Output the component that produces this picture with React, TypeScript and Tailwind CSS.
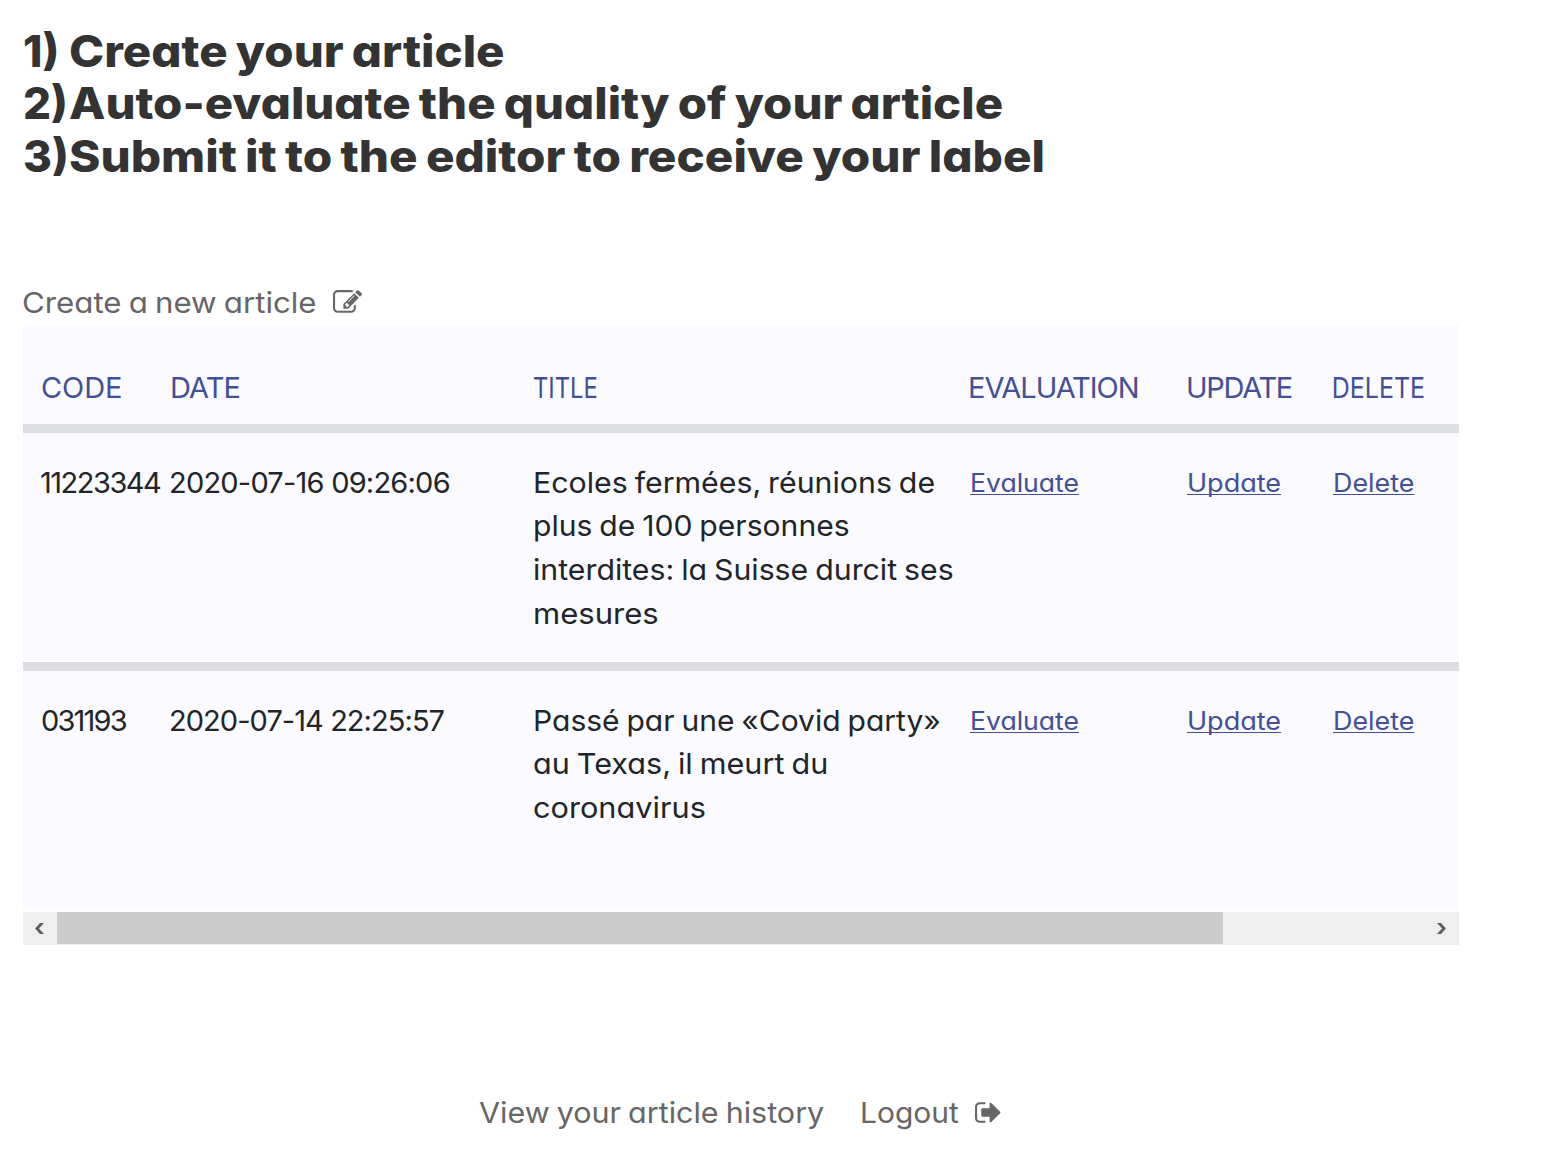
import type { ReactNode } from "react";

function PencilSquareIcon() {
  return (
    <svg viewBox="0 0 1792 1792" className="size-[29px] shrink-0 fill-current" aria-hidden="true">
      <path d="M888 1184l116-116-152-152-116 116v56h96v96h56zm440-720q-16-16-33 1l-350 350q-17 17-1 33t33-1l350-350q17-17 1-33zm80 594v190q0 119-84.5 203.5t-203.5 84.5h-832q-119 0-203.5-84.5t-84.5-203.5v-832q0-119 84.5-203.5t203.5-84.5h832q63 0 117 25 15 7 18 23 3 17-9 29l-49 49q-14 14-32 8-23-6-45-6h-832q-66 0-113 47t-47 113v832q0 66 47 113t113 47h832q66 0 113-47t47-113v-126q0-13 9-22l64-64q15-15 35-7t20 29zm-96-738l288 288-672 672h-288v-288zm444 132l-92 92-288-288 92-92q28-28 68-28t68 28l152 152q28 28 28 68t-28 68z" />
    </svg>
  );
}

function SignOutIcon() {
  return (
    <svg viewBox="0 0 1792 1792" className="size-[29px] shrink-0 fill-current" aria-hidden="true">
      <path d="M704 1440q0 4 1 20t.5 26.5-3 23.5-10 19.5-20.5 6.5h-320q-119 0-203.5-84.5t-84.5-203.5v-704q0-119 84.5-203.5t203.5-84.5h320q13 0 22.5 9.5t9.5 22.5q0 4 1 20t.5 26.5-3 23.5-10 19.5-20.5 6.5h-320q-66 0-113 47t-47 113v704q0 66 47 113t113 47h312l11.5 1 11.5 3 8 5.5 7 9 2 13.5zm928-544q0 26-19 45l-544 544q-19 19-45 19t-45-19-19-45v-288h-448q-26 0-45-19t-19-45v-384q0-26 19-45t45-19h448v-288q0-26 19-45t45-19 45 19l544 544q19 19 19 45z" />
    </svg>
  );
}

const steps = [
  { number: "1)", text: "Create your article", stretch: "scale-x-[1.077]" },
  { number: "2)", text: "Auto-evaluate the quality of your article", stretch: "scale-x-[1.076]" },
  { number: "3)", text: "Submit it to the editor to receive your label", stretch: "scale-x-[1.082]" },
];

const headers = [
  { label: "CODE", style: "pl-px tracking-[-0.1px]" },
  { label: "DATE", style: "pl-px tracking-[-0.9px]" },
  { label: "TITLE", style: "origin-left scale-x-[0.82]" },
  { label: "EVALUATION", style: "-ml-px tracking-[-1.05px]" },
  { label: "UPDATE", style: "tracking-[-1.3px]" },
  { label: "DELETE", style: "origin-left scale-x-[0.86] pl-px" },
];

const articles = [
  {
    code: "11223344",
    codeTracking: "tracking-[-1.5px]",
    date: "2020-07-16 09:26:06",
    dateTracking: "tracking-[-0.78px]",
    title: [
      { text: "Ecoles fermées, réunions de", stretch: "scale-x-[1.045]" },
      { text: "plus de 100 personnes", stretch: "scale-x-[1.038]" },
      { text: "interdites: la Suisse durcit ses", stretch: "scale-x-[1.044]" },
      { text: "mesures", stretch: "scale-x-[1.07]" },
    ],
    height: "h-[238px] border-b-9",
  },
  {
    code: "031193",
    codeTracking: "pl-px tracking-[-1.8px]",
    date: "2020-07-14 22:25:57",
    dateTracking: "tracking-[-0.94px]",
    title: [
      { text: "Passé par une «Covid party»", stretch: "scale-x-[1.035]" },
      { text: "au Texas, il meurt du", stretch: "scale-x-[1.054]" },
      { text: "coronavirus", stretch: "scale-x-[1.058]" },
    ],
    height: "h-[240px]",
  },
];

function Row({ className, children }: { className: string; children: ReactNode }) {
  return (
    <div className={`grid grid-cols-[129px_364px_436px_217px_145px_1fr] border-[#dddee2] pl-[17px] whitespace-nowrap ${className}`}>
      {children}
    </div>
  );
}

function Action({ label, stretch }: { label: string; stretch: string }) {
  return (
    <div>
      <a
        href="#"
        className={`block w-fit origin-left text-[25.5px] text-[#434f97] underline decoration-1 underline-offset-2 [text-decoration-skip-ink:none] ${stretch}`}
      >
        {label}
      </a>
    </div>
  );
}

export default function App() {
  return (
    <main className="h-[1155px] overflow-hidden bg-white pt-[25px] pl-[23px] font-['Inter',sans-serif] text-[29px] leading-[43.5px] text-[#212529] [font-feature-settings:'cv11']">
      <h1 className="text-[44px] leading-[52.3px] font-extrabold text-[#333333]">
        {steps.map((s) => (
          <span key={s.number} className="flex whitespace-nowrap">
            <span className="w-[46px]">{s.number}</span>
            <span className={`origin-left [word-spacing:-2px] ${s.stretch}`}>{s.text}</span>
          </span>
        ))}
      </h1>

      <a href="#" className="mt-[99px] flex h-[43px] w-fit items-start text-[#666666]">
        <span className="-ml-px w-[311px] origin-left scale-x-[1.077] whitespace-nowrap [word-spacing:-1.5px]">Create a new article</span>
        <span className="pt-[7px]">
          <PencilSquareIcon />
        </span>
      </a>

      <section className="w-[1436px]">
        <div className="h-[587px] bg-[#fafaff]">
          <Row className="h-[109px] border-b-9 pt-[42px] text-[#434f97]">
            {headers.map((h) => (
              <div key={h.label} className={h.style}>
                {h.label}
              </div>
            ))}
          </Row>
          {articles.map((a) => (
            <Row key={a.code} className={`pt-[28px] ${a.height}`}>
              <div className={a.codeTracking}>{a.code}</div>
              <div className={a.dateTracking}>{a.date}</div>
              <div className="leading-[43.6px] [word-spacing:-1.5px]">
                {a.title.map((line) => (
                  <div key={line.text} className={`w-fit origin-left ${line.stretch}`}>
                    {line.text}
                  </div>
                ))}
              </div>
              <div className="pl-px">
                <Action label="Evaluate" stretch="scale-x-[1.042]" />
              </div>
              <div className="pl-px">
                <Action label="Update" stretch="scale-x-[1.06]" />
              </div>
              <div className="pl-[1.6px]">
                <Action label="Delete" stretch="scale-x-[1.054]" />
              </div>
            </Row>
          ))}
        </div>
        <div className="mt-px flex h-[33px] items-start bg-[#efefef] text-[#606060]">
          <div className="w-[34px] pt-[11px] pl-3">
            <svg viewBox="0 0 9 11" className="h-[11px] w-[9px] fill-current">
              <path d="M5 0H9L4 5.5 9 11H5L0 5.5Z" />
            </svg>
          </div>
          <div className="h-8 w-[1166px] bg-[#cccccc]" />
          <div className="ml-auto pt-[11px] pr-[13px]">
            <svg viewBox="0 0 9 11" className="h-[11px] w-[9px] fill-current">
              <path d="M4 0H0L5 5.5 0 11H4L9 5.5Z" />
            </svg>
          </div>
        </div>
      </section>

      <footer className="mt-[146px] flex pl-[456px] text-[#666666]">
        <a href="#" className="w-[381px] origin-left scale-x-[1.052] [word-spacing:-1.5px]">View your article history</a>
        <a href="#" className="flex">
          <span className="w-[114px] origin-left scale-x-[1.033]">Logout</span>
          <span className="pt-[7px]">
            <SignOutIcon />
          </span>
        </a>
      </footer>
    </main>
  );
}
